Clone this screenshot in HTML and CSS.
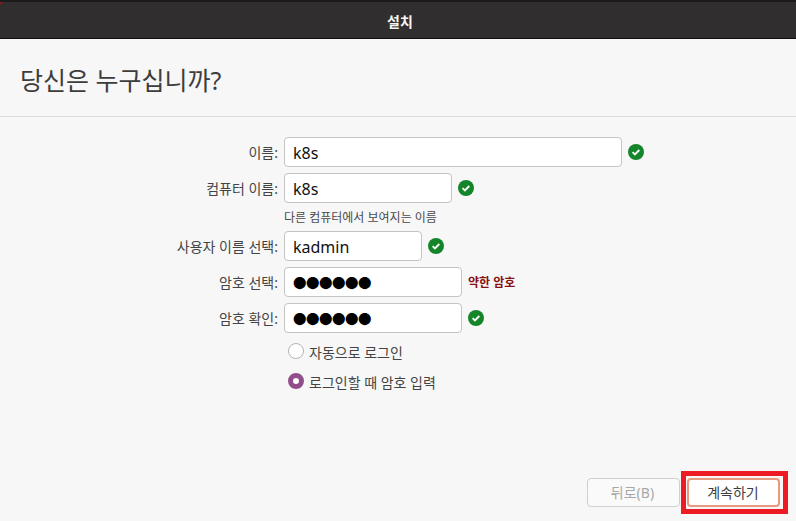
FILE: index.html
```html
<!DOCTYPE html>
<html lang="ko">
<head>
<meta charset="utf-8">
<title>설치</title>
<link rel="stylesheet" href="styles.css">
</head>
<body>
<div class="window">
  <header class="titlebar"><span class="corner"></span>설치</header>
  <div class="heading"><h1>당신은 누구십니까?</h1></div>
  <main class="form">
    <div class="row">
      <span class="label">이름:</span>
      <div class="input w-full">k8s</div>
      <svg class="check" viewBox="0 0 16 16"><circle cx="8" cy="8" r="8"/><path d="M4.6 8.2l2.3 2.2 4.4-4.4"/></svg>
    </div>
    <div class="row">
      <span class="label">컴퓨터 이름:</span>
      <div class="input w-host">k8s</div>
      <svg class="check" viewBox="0 0 16 16"><circle cx="8" cy="8" r="8"/><path d="M4.6 8.2l2.3 2.2 4.4-4.4"/></svg>
    </div>
    <div class="hint">다른 컴퓨터에서 보여지는 이름</div>
    <div class="row">
      <span class="label">사용자 이름 선택:</span>
      <div class="input w-user">kadmin</div>
      <svg class="check" viewBox="0 0 16 16"><circle cx="8" cy="8" r="8"/><path d="M4.6 8.2l2.3 2.2 4.4-4.4"/></svg>
    </div>
    <div class="row">
      <span class="label">암호 선택:</span>
      <div class="input w-pass dots">●●●●●●</div>
      <span class="weak">약한 암호</span>
    </div>
    <div class="row">
      <span class="label">암호 확인:</span>
      <div class="input w-pass dots">●●●●●●</div>
      <svg class="check" viewBox="0 0 16 16"><circle cx="8" cy="8" r="8"/><path d="M4.6 8.2l2.3 2.2 4.4-4.4"/></svg>
    </div>
    <div class="radios">
      <div class="radio"><span class="dot"></span>자동으로 로그인</div>
      <div class="radio"><span class="dot on"></span>로그인할 때 암호 입력</div>
    </div>
  </main>
  <footer class="actions">
    <div class="btn disabled">뒤로(B)</div>
    <div class="highlight"><div class="btn primary">계속하기</div></div>
  </footer>
</div>
</body>
</html>
```
FILE: styles.css
```css
* { box-sizing: border-box; }
html, body { margin: 0; height: 100%; }
body {
  background: #f7f7f7;
  font-family: "Noto Sans", "Noto Sans CJK KR", sans-serif;
  color: #3d3d3d;
  overflow: hidden;
}
.window { display: flex; flex-direction: column; height: 521px; }
.titlebar {
  position: relative;
  height: 39px;
  background: #302e2e;
  border-top: 2px solid #1c1a1a;
  border-bottom: 1px solid #111;
  color: #f4f4f4;
  font-size: 14px;
  font-weight: 700;
  line-height: 39px;
  padding-left: 4px;
  text-align: center;
}
.corner {
  position: absolute; left: 0; top: 0;
  border-top: 3px solid #8a1a20;
  border-right: 3px solid transparent;
}
.heading {
  height: 78px;
  padding: 4px 20px 0;
  border-bottom: 1px solid #dcdcdc;
  display: flex;
  align-items: center;
}
h1 {
  margin: 0;
  font-size: 25px;
  font-weight: 400;
  line-height: 36px;
  color: #3d3d3d;
}
.form { flex: 1; padding-top: 20px; display: flex; flex-direction: column; }
.row { display: flex; align-items: center; height: 30px; margin-bottom: 6px; }
.label { width: 278px; margin-right: 6px; padding-top: 2px; text-align: right; font-size: 14px; line-height: 26px; color: #444; }
.input {
  height: 30px;
  background: #fff;
  border: 1px solid #c4c4c4;
  border-radius: 4px;
  padding-left: 8px;
  font-size: 16px;
  line-height: 30px;
  color: #111;
}
.w-full { width: 338px; }
.w-host { width: 168px; }
.w-user { width: 138px; }
.w-pass { width: 178px; }
.dots { font-size: 13.5px; line-height: 31px; letter-spacing: -0.5px; color: #000; }
.check { width: 16px; height: 16px; margin-left: 6px; flex: none; }
.check circle { fill: #15852a; }
.check path { fill: none; stroke: #fff; stroke-width: 1.8; }
.hint { margin: -2px 0 4px 284px; height: 20px; font-size: 12px; line-height: 22px; color: #4a4a4a; }
.weak { margin-left: 6px; font-size: 12px; font-weight: 700; color: #8a0f12; }
.radios { padding: 3px 0 0 288px; display: flex; flex-direction: column; gap: 10px; }
.radio { display: flex; align-items: center; height: 20px; font-size: 14px; color: #444; }
.dot {
  width: 16px; height: 16px; margin-right: 5px;
  border: 1px solid #b5b5b5; border-radius: 50%; background: #fff; flex: none;
  position: relative; top: -1px;
}
.dot.on { background: #924d8b; border: 5px solid #924d8b; }
.dot.on::after {
  content: ""; position: absolute; left: 0; top: 0;
  width: 6px; height: 6px; border-radius: 50%; background: #fff;
}
.actions {
  display: flex;
  justify-content: flex-end;
  align-items: center;
  gap: 1px;
  padding: 0 8px 7px 0;
}
.btn {
  width: 93px; height: 29px;
  border-radius: 4px;
  background: #fafafa;
  font-size: 14px;
  line-height: 27px;
  text-align: center;
}
.btn.disabled { border: 1px solid #cfcfcf; color: #a8a8a8; padding-right: 2px; }
.btn.primary { border: 2px solid #e89a80; background: #fff; color: #3d3d3d; line-height: 25px; padding-right: 1px; }
.highlight { border: 5px solid #ed1c24; padding: 2px 2px 2px 1px; width: 107px; height: 43px; }
```
